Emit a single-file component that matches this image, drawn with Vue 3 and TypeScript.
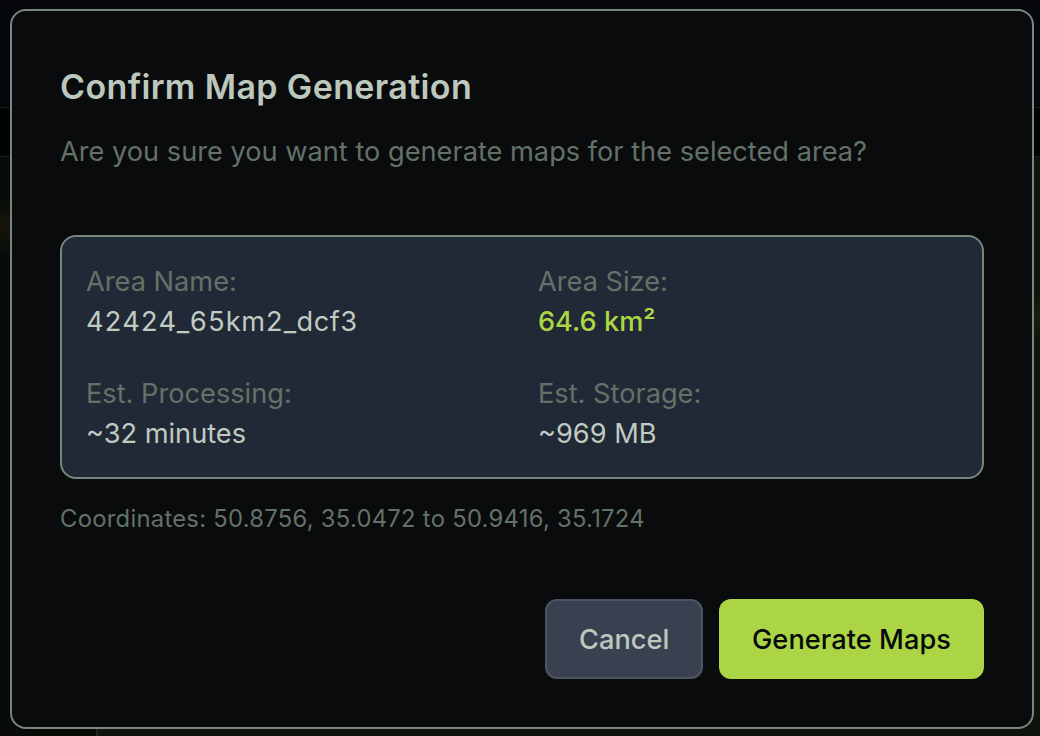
<script setup lang="ts">
const stats = [
  { label: 'Area Name:', value: '42424_65km2_dcf3', kind: 'name' },
  { label: 'Area Size:', value: '64.6 km²', kind: 'accent' },
  { label: 'Est. Processing:', value: '~32 minutes', kind: '' },
  { label: 'Est. Storage:', value: '~969 MB', kind: '' },
]
</script>

<template>
  <div class="page">
    <div class="topbar"></div>
    <div class="toolbar"></div>
    <div class="map"></div>

    <div class="overlay">
      <div class="modal">
        <h2 class="title">Confirm Map Generation</h2>
        <p class="subtitle">Are you sure you want to generate maps for the selected area?</p>

        <div class="summary">
          <div v-for="s in stats" :key="s.label" class="stat">
            <div class="stat-label">{{ s.label }}</div>
            <div class="stat-value" :class="s.kind">{{ s.value }}</div>
          </div>
        </div>

        <p class="coords">Coordinates: 50.8756, 35.0472 to 50.9416, 35.1724</p>

        <div class="actions">
          <button class="btn btn-cancel">Cancel</button>
          <button class="btn btn-primary">Generate Maps</button>
        </div>
      </div>
    </div>
  </div>
</template>

<style>
html, body {
  margin: 0;
  background: #05070b;
}
</style>

<style scoped>
.page {
  position: relative;
  width: 1040px;
  height: 736px;
  overflow: hidden;
  display: flex;
  flex-direction: column;
  font-family: Inter, "Liberation Sans", sans-serif;
}

.topbar {
  height: 107px;
  background: #05070c;
  border-bottom: 1px solid #1a1e1c;
}

.toolbar {
  height: 48px;
  background: #020303;
  border-bottom: 1px solid #1a1e1c;
}

.map {
  flex: 1;
  background:
    linear-gradient(90deg, transparent 96px, #1c2610 96px, #1c2610 98px, transparent 98px) bottom / 100% 8px no-repeat,
    radial-gradient(ellipse 40px 30px at 0 70px, #16160e, transparent),
    radial-gradient(ellipse 30px 24px at 100% 160px, #18220f, transparent),
    linear-gradient(90deg, #090b08 0, #090b08 96px, #0e140b 96px);
}

.overlay {
  position: absolute;
  top: 9px;
  left: 10px;
}

.modal {
  box-sizing: border-box;
  width: 1024px;
  height: 720px;
  padding: 50px 48px 48px 48px;
  background: #090b0d;
  border: 2px solid #76867b;
  border-radius: 16px;
  display: flex;
  flex-direction: column;
}

.title {
  margin: 0;
  font-size: 34px;
  line-height: 52px;
  font-weight: 600;
  letter-spacing: 0.36px;
  color: #bcc7be;
}

.subtitle {
  margin: 19px 0 0;
  font-size: 27.2px;
  line-height: 40px;
  color: #637268;
}

.summary {
  box-sizing: border-box;
  margin-top: 63px;
  height: 244px;
  padding: 25px 24px 24px;
  background: #212936;
  border: 2px solid #76867b;
  border-radius: 16px;
  display: grid;
  grid-template-columns: 1fr 1fr;
  column-gap: 32px;
  row-gap: 32px;
}

.stat-label {
  font-size: 27.2px;
  line-height: 40px;
  color: #637268;
}

.stat-value {
  font-size: 27.2px;
  line-height: 40px;
  color: #c0cbc2;
}

.stat-value.name {
  font-variant-numeric: tabular-nums;
  letter-spacing: 0.5px;
}

.stat-value.accent {
  color: #acd741;
  font-weight: 500;
}

.coords {
  margin: 20px 0 0;
  font-size: 23.8px;
  line-height: 40px;
  letter-spacing: 0.27px;
  color: #637268;
}

.actions {
  margin-top: auto;
  display: flex;
  justify-content: flex-end;
  gap: 16px;
}

.btn {
  box-sizing: border-box;
  height: 80px;
  font-family: inherit;
  font-size: 27.2px;
  letter-spacing: 0.05px;
  border-radius: 12px;
  font-weight: 500;
}

.btn-cancel {
  padding: 0 31.5px;
  background: #394150;
  border: 2px solid #4b5563;
  color: #bcc7be;
}

.btn-primary {
  padding: 0 33px;
  background: #abd544;
  border: 0;
  color: #060a0a;
}
</style>
